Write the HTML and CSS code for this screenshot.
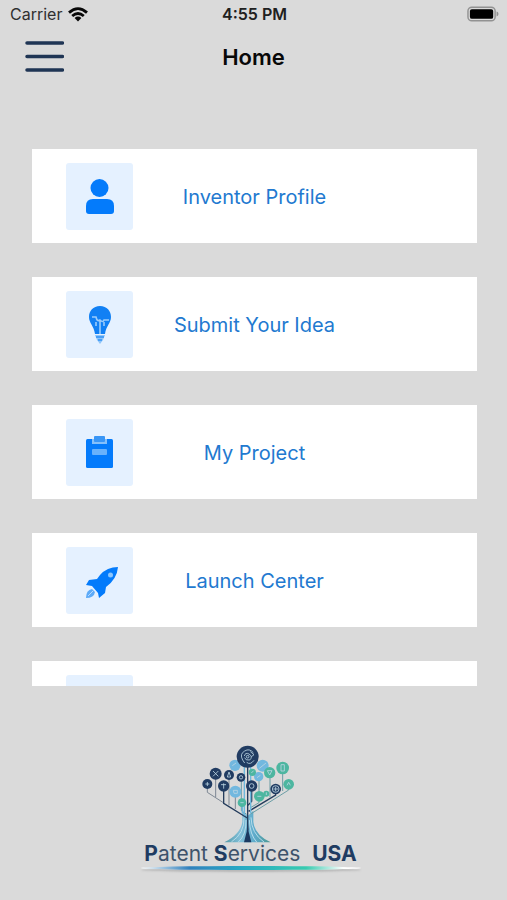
FILE: index.html
```
<!DOCTYPE html>
<html lang="en">
<head>
<meta charset="utf-8">
<meta name="viewport" content="width=device-width, initial-scale=1">
<title>Home</title>
<link rel="stylesheet" href="styles.css">
</head>
<body>
<div class="screen">
  <div class="status">
    <div class="carrier">
      <span>Carrier</span>
      <svg class="wifi" viewBox="0 0 20 15" aria-hidden="true">
        <g fill="none" stroke="#080808" stroke-width="2.8">
          <path d="M1 5.6Q10-2.4 19 5.6"/>
          <path d="M4.2 9Q10 4 15.800 9"/>
        </g>
        <path d="M6.600 11Q10 8.200 13.400 11L10 14.600Z" fill="#080808"/>
      </svg>
    </div>
    <time class="clock">4:55 PM</time>
    <svg class="battery" viewBox="0 0 33 16" aria-hidden="true">
      <rect x="1" y="1" width="28" height="14" rx="4" fill="none" stroke="#929292" stroke-width="1.500"/>
      <rect x="3" y="3" width="24" height="10" rx="2" fill="#000"/>
      <path d="M30.500 5.500Q32.500 6 32.500 8T30.500 10.500Z" fill="#929292"/>
    </svg>
  </div>
  <header class="navbar">
    <button class="menu" type="button" aria-label="Menu">
      <svg viewBox="0 0 40 32" aria-hidden="true">
        <path d="M3 2H38.500M3 15.500H38.500M3 29H38.500" stroke="#1f3554" stroke-width="3.500" stroke-linecap="round"/>
      </svg>
    </button>
    <h1>Home</h1>
  </header>
  <main class="list">
    <a class="card" href="#profile">
      <span class="tile"><svg viewBox="0 0 67 67" aria-hidden="true">
        <g fill="#047bfb"><circle cx="33.500" cy="25" r="9"/><path d="M20 45V43Q20 36 27 36H41Q48 36 48 43V48Q48 51 45 51H23Q20 51 20 48Z"/></g>
      </svg></span>
      <span class="label">Inventor Profile</span>
    </a>
    <a class="card" href="#idea">
      <span class="tile"><svg viewBox="0 0 67 67" aria-hidden="true">
        <path d="M34 15C27 15 23 20 23 26C23 32 28 35 29 43H39C40 35 45 32 45 26C45 20 41 15 34 15Z" fill="#1180f4"/>
        <path d="M26 26H30Q31 31 34 29Q37 32 38 29H43M34 30V43M30 31V35M38 31V35" fill="none" stroke="#9acbfb" stroke-width="1.600"/>
        <path d="M29 44H39L37 49L34 53L31 49Z" fill="#8fc5fa"/>
        <path d="M30 46H38M32 49H36" stroke="#3293f5" stroke-width="1.300"/>
      </svg></span>
      <span class="label">Submit Your Idea</span>
    </a>
    <a class="card" href="#project">
      <span class="tile"><svg viewBox="0 0 67 67" aria-hidden="true">
        <rect x="20" y="20" width="27" height="29" rx="1.500" fill="#047bfb"/>
        <path d="M26 20H41V25H26Z" fill="#84c0fb"/>
        <rect x="28" y="17" width="11" height="6" rx="1" fill="#3996f6"/>
        <rect x="26" y="30" width="15" height="6" rx="1" fill="#69b2fb"/>
      </svg></span>
      <span class="label">My Project</span>
    </a>
    <a class="card" href="#launch">
      <span class="tile"><svg viewBox="0 0 67 67" aria-hidden="true">
        <path d="M52 20Q41 20 34 28L31 32L23 33L20 38L26 39L32 46L33 51L39 46L40 40Q51 32 52 20Z" fill="#047bfb"/>
        <circle cx="44.500" cy="28" r="2.500" fill="#8cc6fd"/>
        <path d="M26 42Q20 43 20 51Q28 51 29 45Z" fill="#5eabf8"/>
        <path d="M22 49L27 44" stroke="#b7daff" stroke-width="1"/>
      </svg></span>
      <span class="label">Launch Center</span>
    </a>
    <a class="card" href="#more" aria-label="More">
      <span class="tile"></span>
    </a>
  </main>
  <footer class="brand">
    <svg class="tree" viewBox="0 0 345 312" aria-hidden="true">
      <defs>
        <linearGradient id="trunk" x1="0" x2="1">
          <stop offset="0" stop-color="#539aa8"/><stop offset=".35" stop-color="#82bfd8"/>
          <stop offset=".65" stop-color="#5eabcb"/><stop offset="1" stop-color="#4b9790"/>
        </linearGradient>
      </defs>
      <path d="M157 215L173 228L190 212V246Q194 285 242 307H103Q151 283 157 246Z" fill="url(#trunk)"/>
      <path d="M162 232Q164 280 124 306M168 240Q169 285 145 306M183 232Q184 280 222 306M178 240Q180 285 200 306" fill="none" stroke="#b5dceb" stroke-width="3"/>
      <path d="M173 238L176 275L184 307H162L170 275Z" fill="#1b3961"/>
      <g fill="none" stroke-width="3">
        <path d="M52 145V157L100 188M77 110V171M117 112V196M136 165V207" stroke="#7d8793"/>
        <path d="M101 145V190L172 234M173 75V270M185 145V184L174 196M257 155V165L176 214" stroke="#253d5d" stroke-width="4"/>
        <path d="M154 120V212L170 223M207 120V188L183 202M240 108V172M278 95V153M296 140V150L182 222" stroke="#6b9da5"/>
        <path d="M163 80V226M182 80V220M157 195V220" stroke="#6eb9dd" stroke-width="4"/>
      </g>
      <g fill="#72b8df"><circle cx="135" cy="76" r="17"/><circle cx="218" cy="77" r="18"/><circle cx="136" cy="155" r="18"/><circle cx="206" cy="110" r="14"/></g>
      <g fill="#4db6a0"><circle cx="278" cy="84" r="19"/><circle cx="239" cy="98" r="17"/><circle cx="187" cy="97" r="11"/><circle cx="296" cy="133" r="16"/><circle cx="208" cy="169" r="16"/><circle cx="229" cy="161" r="9"/><circle cx="156" cy="188" r="13"/></g>
      <g fill="#213c62"><circle cx="173" cy="50" r="33"/><circle cx="77" cy="101" r="18"/><circle cx="117" cy="105" r="15"/><circle cx="52" cy="132" r="15"/><circle cx="101" cy="138" r="17"/><circle cx="153" cy="112" r="13"/><circle cx="185" cy="138" r="17"/><circle cx="257" cy="147" r="16"/></g>
      <g fill="none" stroke="#bcd5e2" stroke-width="2.500">
        <path d="M164 69L158 60Q148 42 164 33Q178 24 190 38M163 48Q166 36 177 42Q190 50 179 60Q166 62 164 53M181 35L192 44L184 50M170 67Q181 76 192 61"/>
        <circle cx="173" cy="50" r="4"/>
        <path d="M69 93L85 109M85 93L69 109M112 111L117 96L122 111ZM46 132H58M52 126V138M93 134H108M101 130V146"/>
        <circle cx="153" cy="112" r="5"/><circle cx="185" cy="138" r="7"/><circle cx="257" cy="147" r="10"/><path d="M250 147H264M257 140V154"/>
        <path d="M208 85L228 69M130 151H142V160H132ZM273 74H283V93H273ZM232 92H246L239 105ZM184 99L191 92M202 169H214M291 136L296 127L301 136M151 188H161M127 77L138 69M201 113L211 106M229 157V165"/>
      </g>
    </svg>
    <p class="name"><b>P</b>atent <b>S</b>ervices&nbsp; <b>USA</b></p>
    <div class="rule"></div>
  </footer>
</div>
</body>
</html>
```

FILE: styles.css
```
* {
  box-sizing: border-box;
}

body {
  margin: 0;
  background: #dadada;
  color: #080808;
  font-family: Inter, "Liberation Sans", sans-serif;
}

.screen {
  display: flex;
  flex-direction: column;
  height: 100vh;
  overflow: hidden;
}

.status {
  display: grid;
  grid-template-columns: 1fr auto 1fr;
  align-items: center;
  height: 28px;
  padding: 0 8px 0 10px;
  font-size: 16px;
  line-height: 20px;
}

.carrier {
  display: flex;
  align-items: center;
  gap: 6px;
  color: #303030;
}

.wifi {
  width: 20px;
  height: 15px;
}

.clock {
  font-weight: 600;
  color: #202020;
}

.battery {
  justify-self: end;
  width: 32px;
  height: 16px;
}

.navbar {
  display: grid;
  grid-template-columns: 1fr auto 1fr;
  align-items: center;
  height: 58px;
  padding: 0 24px;
}

.menu {
  width: 40px;
  height: 32px;
  padding: 0;
  border: 0;
  background: none;
}

.menu svg {
  display: block;
}

h1 {
  margin: 0;
  font-size: 22px;
  font-weight: 600;
  line-height: 28px;
}

.list {
  flex: 1;
  display: flex;
  flex-direction: column;
  gap: 34px;
  min-height: 0;
  margin: 63px 30px 0 32px;
  overflow: hidden;
}

.card {
  flex: none;
  display: grid;
  grid-template-columns: 67px 1fr 67px;
  align-items: center;
  height: 94px;
  padding: 0 34px;
  background: #fff;
  color: #2279d0;
  font-size: 20px;
  line-height: 28px;
  text-align: center;
  text-decoration: none;
}

.label {
  padding-top: 2px;
}

.tile {
  height: 67px;
  border-radius: 3px;
  background: #e5f1ff;
}

.tile svg {
  display: block;
}

.brand {
  display: flex;
  flex-direction: column;
  align-items: center;
  padding: 54px 0 30px;
}

.tree {
  width: 115px;
  height: 104px;
  margin-right: 12px;
}

.name {
  margin: 0 6px 2px 0;
  color: #3e536b;
  font-size: 21px;
  line-height: 20px;
}

.name b {
  color: #1f3c62;
}

.rule {
  width: 220px;
  height: 4px;
  margin: 0 6px 0 0;
  border-radius: 50%;
  background: linear-gradient(90deg, #fff, #2f80bd 22%, #28a9c4 45%, #38cbb0 75%, #fff 92%);
  box-shadow: 0 2px 2px #b8b8b8;
}
```
